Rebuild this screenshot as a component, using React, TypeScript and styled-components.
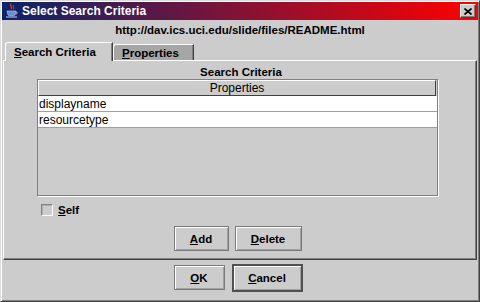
import React from "react";
import styled, { createGlobalStyle } from "styled-components";

const Global = createGlobalStyle`
  html, body { margin: 0; padding: 0; background: #cccccc; }
  body { font-family: "Liberation Sans", Arial, sans-serif; }
  * { box-sizing: border-box; }
`;

const Window = styled.div`
  width: 480px;
  height: 302px;
  background: #cccccc;
  border: 1px solid;
  border-color: #dcdcdc #404040 #404040 #dcdcdc;
  box-shadow: inset 1px 1px 0 #ffffff, inset -1px -1px 0 #808080;
  padding: 1px;
  display: flex;
  flex-direction: column;
  font-family: "Liberation Sans", Arial, sans-serif;
  color: #000;
`;

const TitleBar = styled.div`
  height: 18px;
  flex: none;
  display: flex;
  align-items: center;
  padding: 0 2px 0 3px;
  background: linear-gradient(to right, #0a246a 0%, #841235 50%, #ff0000 100%);
`;

const TitleText = styled.span`
  color: #fff;
  font-weight: bold;
  font-size: 12px;
  margin-left: 3px;
  flex: 1;
`;

const CloseBtn = styled.div`
  width: 16px;
  height: 14px;
  background: #cccccc;
  border: 1px solid;
  border-color: #ffffff #404040 #404040 #ffffff;
  box-shadow: inset -1px -1px 0 #808080;
  display: flex;
  align-items: center;
  justify-content: center;
`;

const UrlRow = styled.div`
  height: 20px;
  flex: none;
  display: flex;
  align-items: center;
  justify-content: center;
  font-size: 11.5px;
  font-weight: bold;
`;

const TabRow = styled.div`
  height: 20px;
  flex: none;
  display: flex;
  align-items: flex-end;
  padding-left: 3px;
  position: relative;
  z-index: 1;
`;

const Tab = styled.div<{ $active?: boolean }>`
  height: ${(p) => (p.$active ? "19px" : "16px")};
  width: ${(p) => (p.$active ? "108px" : "81px")};
  margin-bottom: ${(p) => (p.$active ? "-1px" : "0")};
  background: ${(p) => (p.$active ? "#cccccc" : "#a6a6a6")};
  border-top: 1px solid #ffffff;
  border-left: 1px solid #ffffff;
  border-right: 1px solid #404040;
  border-top-left-radius: 3px;
  box-shadow: inset -1px 0 0 #808080;
  font-size: 11.5px;
  font-weight: bold;
  display: flex;
  align-items: center;
  padding-left: 8px;
  padding-bottom: ${(p) => (p.$active ? "1px" : "0")};
`;

const Mn = styled.span`
  text-decoration: underline;
`;

const TabPanel = styled.div`
  height: 200px;
  flex: none;
  margin: 0 1px;
  border: 1px solid;
  border-color: #ffffff #404040 #404040 #ffffff;
  box-shadow: inset -1px -1px 0 #808080;
  padding-top: 3px;
  display: flex;
  flex-direction: column;
`;

const PanelLabel = styled.div`
  height: 15px;
  display: flex;
  align-items: center;
  justify-content: center;
  font-size: 11.5px;
  font-weight: bold;
  padding-left: 2px;
`;

const Table = styled.div`
  margin-left: 33px;
  width: 401px;
  height: 117px;
  border: 1px solid #808080;
  box-shadow: 1px 1px 0 #ffffff;
  background: #cccccc;
  display: flex;
  flex-direction: column;
`;

const HeaderCell = styled.div`
  height: 16px;
  flex: none;
  border-top: 1px solid #ffffff;
  border-left: 1px solid #ffffff;
  border-right: 1px solid #404040;
  border-bottom: 1px solid #404040;
  margin-right: 1px;
  font-size: 12px;
  display: flex;
  align-items: center;
  justify-content: center;
`;

const Row = styled.div`
  height: 16px;
  flex: none;
  background: #ffffff;
  border-bottom: 1px solid #a0a0a0;
  font-size: 12px;
  display: flex;
  align-items: center;
  padding-left: 1px;
`;

const CheckRow = styled.div`
  margin: 8px 0 0 37px;
  height: 12px;
  display: flex;
  align-items: center;
  gap: 5px;
  font-size: 11.5px;
  font-weight: bold;
`;

const CheckBox = styled.div`
  width: 12px;
  height: 12px;
  background: #cccccc;
  border: 1px solid;
  border-color: #808080 #ffffff #ffffff #808080;
  box-shadow: inset 1px 1px 0 #b0b0b0;
`;

const ButtonRow = styled.div<{ $gap: number }>`
  display: flex;
  justify-content: center;
  gap: ${(p) => p.$gap}px;
`;

const PanelButtons = styled(ButtonRow)`
  margin-top: 10px;
  padding-right: 5px;
`;

const BottomBar = styled(ButtonRow)`
  flex: 1;
  padding-top: 5px;
  padding-right: 4px;
`;

const Button = styled.div<{ $w: number; $default?: boolean }>`
  width: ${(p) => p.$w}px;
  height: ${(p) => (p.$default ? 28 : 25)}px;
  margin-top: ${(p) => (p.$default ? -1 : 0)}px;
  background: #cccccc;
  border: ${(p) => (p.$default ? "2px solid #505050" : "1px solid #7a7a7a")};
  box-shadow: inset 1px 1px 0 #ffffff, inset -1px -1px 0 #a0a0a0;
  font-size: 11.5px;
  font-weight: bold;
  display: flex;
  align-items: center;
  justify-content: center;
`;

const JavaIcon = () => (
  <svg width="14" height="16" viewBox="0 0 14 16">
    <path d="M6 1 C4 3 8 4 6 6" stroke="#e04020" strokeWidth="1.3" fill="none" />
    <path d="M8.5 2 C7 4 10 4.5 8.5 6.5" stroke="#e04020" strokeWidth="1" fill="none" />
    <path d="M2 8 L11 8 L10 12 C9 13 4 13 3 12 Z" fill="#6a8ad0" stroke="#c8d4f0" strokeWidth="0.6" />
    <path d="M11 9 C13 9 13 11 10.5 11" stroke="#c8d4f0" strokeWidth="0.8" fill="none" />
    <path d="M1 14 L12 14" stroke="#c8d4f0" strokeWidth="1" />
  </svg>
);

const CloseIcon = () => (
  <svg width="8" height="7" viewBox="0 0 8 7">
    <path d="M0.5 0.5 L7.5 6.5 M7.5 0.5 L0.5 6.5" stroke="#000" strokeWidth="1.6" />
  </svg>
);

export default function App() {
  return (
    <>
      <Global />
      <Window>
        <TitleBar>
          <JavaIcon />
          <TitleText>Select Search Criteria</TitleText>
          <CloseBtn>
            <CloseIcon />
          </CloseBtn>
        </TitleBar>
        <UrlRow>http://dav.ics.uci.edu/slide/files/README.html</UrlRow>
        <TabRow>
          <Tab $active>
            <Mn>S</Mn>earch Criteria
          </Tab>
          <Tab>
            <Mn>P</Mn>roperties
          </Tab>
        </TabRow>
        <TabPanel>
          <PanelLabel>Search Criteria</PanelLabel>
          <Table>
            <HeaderCell>Properties</HeaderCell>
            <Row>displayname</Row>
            <Row>resourcetype</Row>
          </Table>
          <CheckRow>
            <CheckBox />
            <span>
              <Mn>S</Mn>elf
            </span>
          </CheckRow>
          <PanelButtons $gap={6}>
            <Button $w={55}>
              <Mn>A</Mn>dd
            </Button>
            <Button $w={67}>
              <Mn>D</Mn>elete
            </Button>
          </PanelButtons>
        </TabPanel>
        <BottomBar $gap={7}>
          <Button $w={51}>
            <Mn>O</Mn>K
          </Button>
          <Button $w={71} $default>
            <Mn>C</Mn>ancel
          </Button>
        </BottomBar>
      </Window>
    </>
  );
}
